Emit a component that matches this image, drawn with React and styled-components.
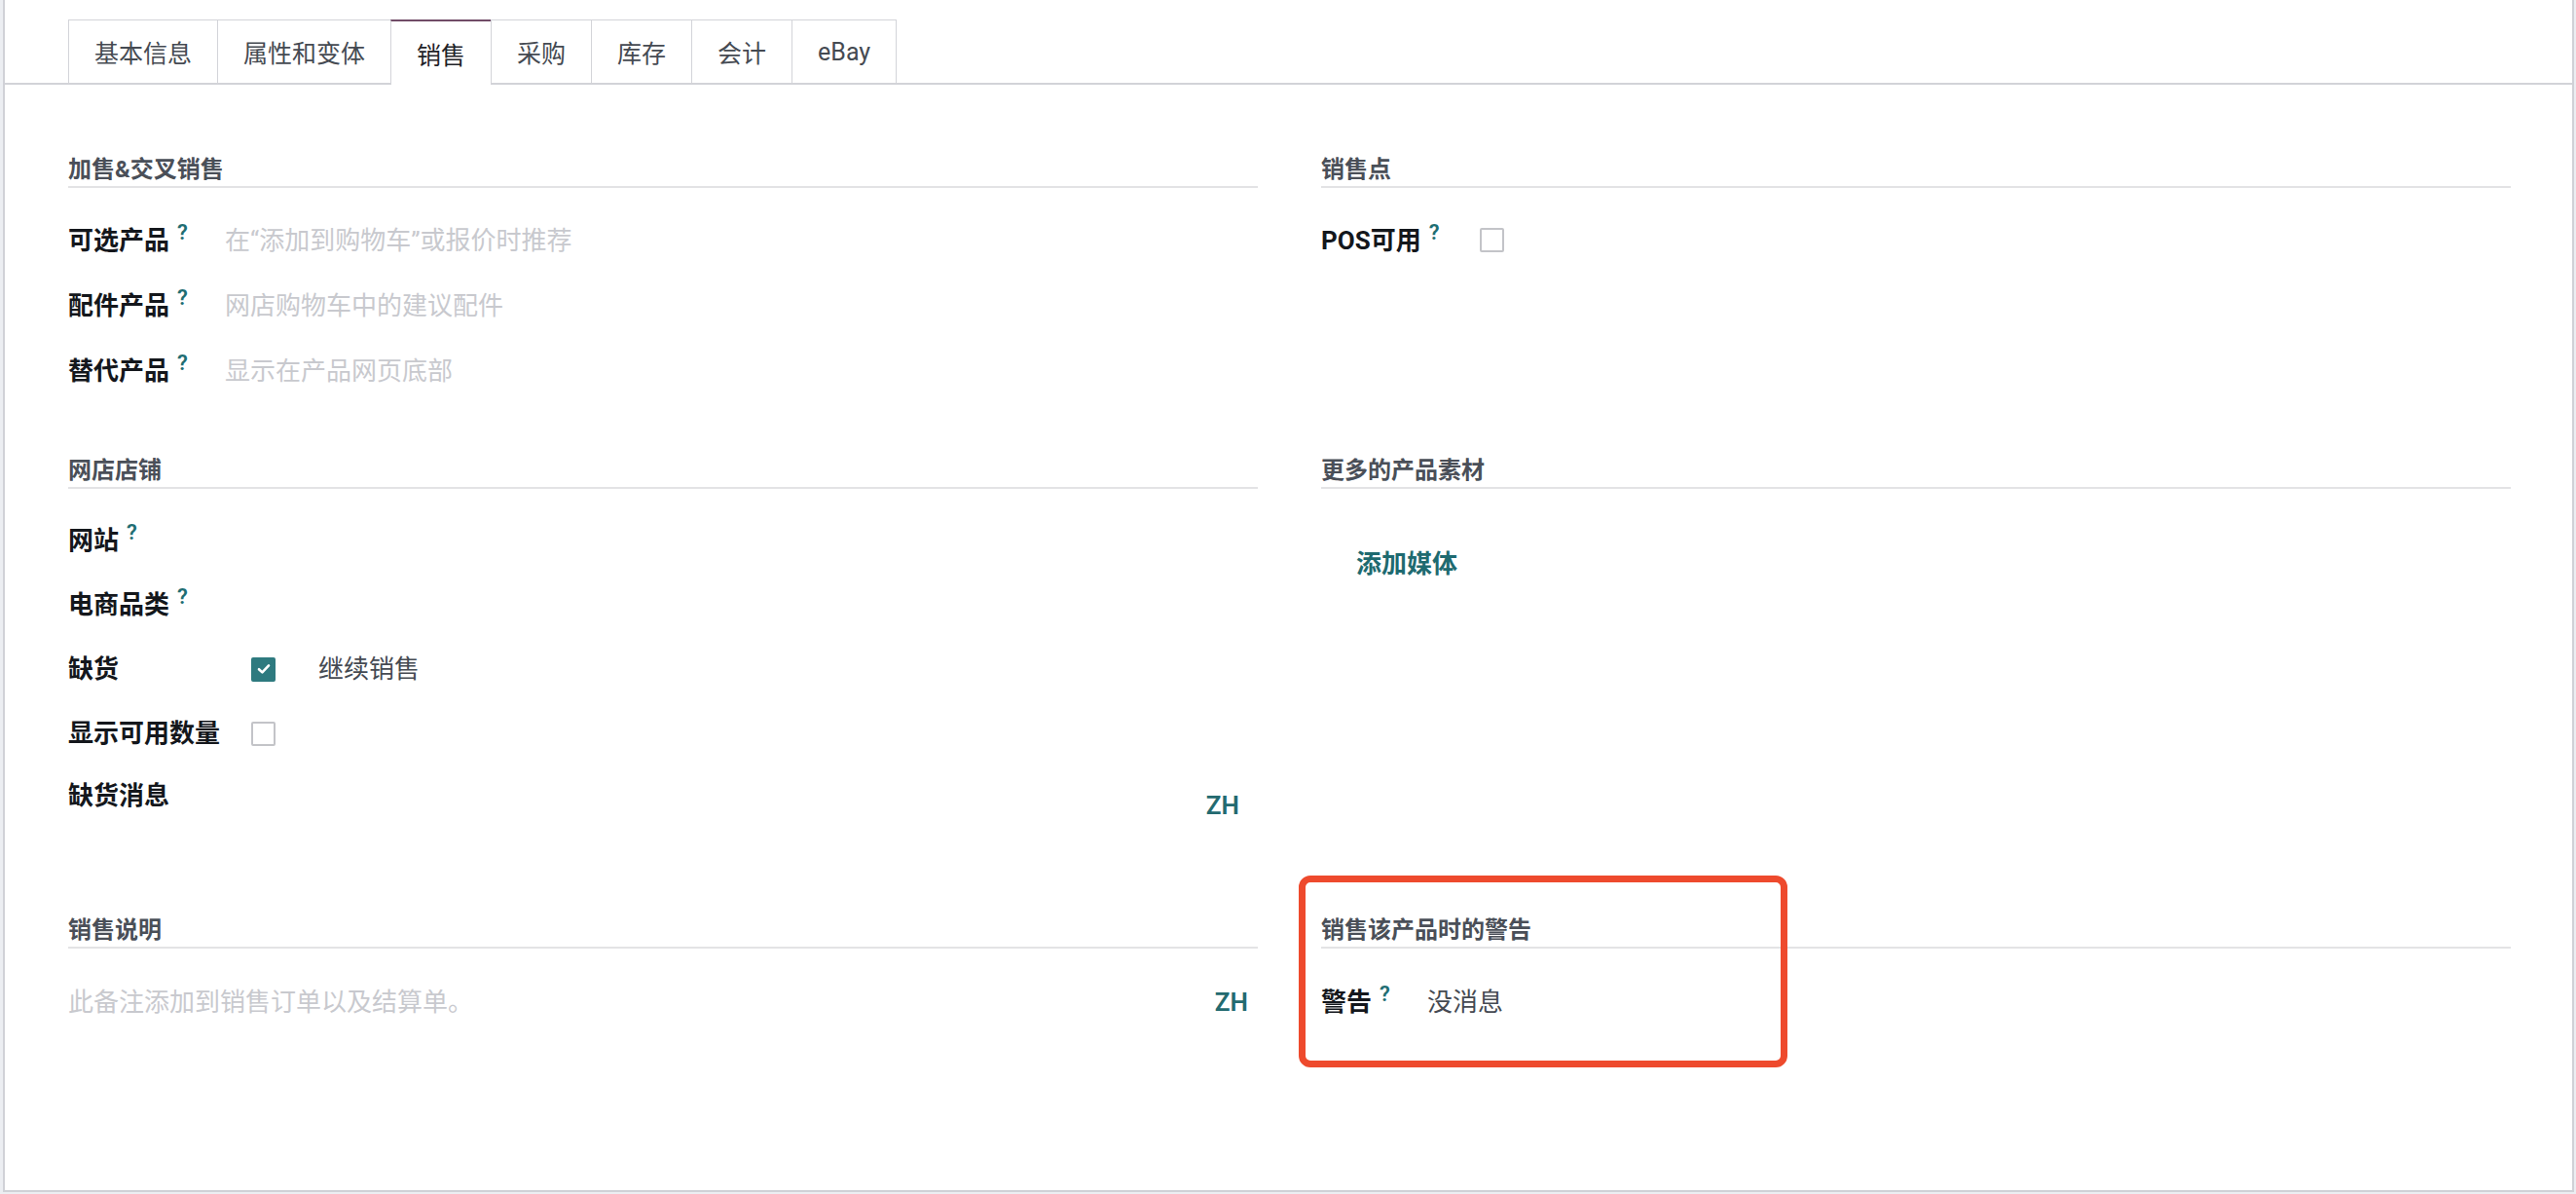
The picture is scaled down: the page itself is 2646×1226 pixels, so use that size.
import React from 'react';
import styled, { createGlobalStyle } from 'styled-components';

const FONT = `"Roboto", "Noto Sans CJK SC", sans-serif`;

const GlobalStyle = createGlobalStyle`
  html, body {
    margin: 0;
    padding: 0;
    background: #eceef2;
    font-family: ${FONT};
  }
  * { box-sizing: border-box; }
`;

const Panel = styled.div`
  position: relative;
  margin-left: 3px;
  width: 2641px;
  height: 1224px;
  background: #fff;
  border: 2px solid #d0d1d7;
  border-top: none;
  overflow: hidden;
`;

const TabBar = styled.div`
  display: flex;
  padding: 20px 0 0 65px;
  border-bottom: 2px solid #d2d3d8;
`;

const Tab = styled.div`
  padding: 0 26px;
  display: flex;
  align-items: center;
  font-size: 25px;
  color: ${(p) => (p.$active ? '#1f2328' : '#454a52')};
  background: #fff;
  border: 1px solid #d3d4d9;
  border-bottom: none;
  border-top: ${(p) => (p.$active ? '2px solid #714b67' : '1px solid #d3d4d9')};
  margin-left: -1px;
  margin-bottom: ${(p) => (p.$active ? '-2px' : '0')};
  height: ${(p) => (p.$active ? '67px' : '65px')};
  position: relative;
  &:first-child { margin-left: 0; }
`;

const Sheet = styled.div`
  display: grid;
  grid-template-columns: 1fr 1fr;
  column-gap: 65px;
  row-gap: 52px;
  padding: 70px 63px 0 65px;
`;

const Group = styled.div`
  position: relative;
  min-width: 0;
`;

const GroupTitle = styled.div`
  font-size: 24px;
  line-height: 34px;
  font-weight: 700;
  color: #4a4f58;
  border-bottom: 2px solid #e3e3e5;
`;

const Rows = styled.div`
  margin-top: 20px;
`;

const Row = styled.div`
  display: flex;
  align-items: ${(p) => (p.$top ? 'flex-start' : 'center')};
  min-height: ${(p) => p.$h || 66}px;
`;

const Label = styled.div`
  flex: 0 0 ${(p) => p.$w}px;
  font-size: 26px;
  line-height: 40px;
  font-weight: 700;
  color: #14171c;
  white-space: nowrap;
  padding-top: ${(p) => (p.$top ? '11px' : '0')};
`;

const Help = styled.sup`
  font-family: "Roboto", sans-serif;
  font-size: 22px;
  font-weight: 600;
  color: #1f6e73;
  margin-left: 8px;
  vertical-align: 10px;
  line-height: 0;
`;

const Placeholder = styled.div`
  font-size: 26px;
  line-height: 40px;
  color: #c8c9ce;
`;

const Value = styled.div`
  font-size: 26px;
  line-height: 40px;
  color: #454a52;
`;

const Box = styled.span`
  display: inline-flex;
  align-items: center;
  justify-content: center;
  width: 25px;
  height: 25px;
  border-radius: 2px;
  border: ${(p) => (p.$checked ? 'none' : '2px solid #c3c4c8')};
  background: ${(p) => (p.$checked ? '#2e7a7f' : '#fff')};
  margin-right: 44px;
`;

const HtmlField = styled.div`
  flex: 1;
  display: flex;
  justify-content: space-between;
  align-items: center;
  padding-right: ${(p) => p.$pr}px;
  padding-top: ${(p) => p.$pt || 0}px;
`;

const Lang = styled.span`
  font-family: "Roboto", sans-serif;
  font-size: 26px;
  font-weight: 600;
  color: #236a70;
  line-height: 40px;
`;

const MediaLink = styled.div`
  padding: 44px 0 0 36px;
  font-size: 26px;
  line-height: 66px;
  font-weight: 600;
  color: #1e6a70;
`;

const Callout = styled.div`
  position: absolute;
  left: -23px;
  top: -39px;
  width: 502px;
  height: 197px;
  border: 7px solid #ee4a2d;
  border-radius: 12px;
  pointer-events: none;
`;

const Check = () => (
  <svg width="14" height="12" viewBox="0 0 14 12">
    <path d="M2 6.2 L5.4 9.4 L12 2.4" fill="none" stroke="#fff" strokeWidth="2.6" strokeLinecap="round" strokeLinejoin="round" />
  </svg>
);

const Checkbox = ({ checked }) => <Box $checked={checked}>{checked && <Check />}</Box>;

const tabs = ['基本信息', '属性和变体', '销售', '采购', '库存', '会计', 'eBay'];

export default function App() {
  return (
    <>
      <GlobalStyle />
      <Panel>
        <TabBar>
          {tabs.map((t) => (
            <Tab key={t} $active={t === '销售'}>{t}</Tab>
          ))}
        </TabBar>

        <Sheet>
          <Group>
            <GroupTitle>加售&amp;交叉销售</GroupTitle>
            <Rows>
              <Row $h={67}>
                <Label $w={161}>可选产品<Help>?</Help></Label>
                <Placeholder>在“添加到购物车”或报价时推荐</Placeholder>
              </Row>
              <Row $h={67}>
                <Label $w={161}>配件产品<Help>?</Help></Label>
                <Placeholder>网店购物车中的建议配件</Placeholder>
              </Row>
              <Row $h={67}>
                <Label $w={161}>替代产品<Help>?</Help></Label>
                <Placeholder>显示在产品网页底部</Placeholder>
              </Row>
            </Rows>
          </Group>

          <Group>
            <GroupTitle>销售点</GroupTitle>
            <Rows>
              <Row $h={67}>
                <Label $w={163}>POS可用<Help>?</Help></Label>
                <Checkbox />
              </Row>
            </Rows>
          </Group>

          <Group>
            <GroupTitle>网店店铺</GroupTitle>
            <Rows>
              <Row>
                <Label $w={188}>网站<Help>?</Help></Label>
              </Row>
              <Row>
                <Label $w={188}>电商品类<Help>?</Help></Label>
              </Row>
              <Row>
                <Label $w={188}>缺货</Label>
                <Checkbox checked />
                <Value>继续销售</Value>
              </Row>
              <Row>
                <Label $w={188}>显示可用数量</Label>
                <Checkbox />
              </Row>
              <Row $top $h={100}>
                <Label $w={188} $top>缺货消息</Label>
                <HtmlField $pr={19} $pt={21}>
                  <span />
                  <Lang>ZH</Lang>
                </HtmlField>
              </Row>
            </Rows>
          </Group>

          <Group>
            <GroupTitle>更多的产品素材</GroupTitle>
            <MediaLink>添加媒体</MediaLink>
          </Group>

          <Group>
            <GroupTitle>销售说明</GroupTitle>
            <Rows>
              <Row $h={70}>
                <HtmlField $pr={10}>
                  <Placeholder>此备注添加到销售订单以及结算单。</Placeholder>
                  <Lang>ZH</Lang>
                </HtmlField>
              </Row>
            </Rows>
          </Group>

          <Group>
            <GroupTitle>销售该产品时的警告</GroupTitle>
            <Rows>
              <Row $h={70}>
                <Label $w={109}>警告<Help>?</Help></Label>
                <Value>没消息</Value>
              </Row>
            </Rows>
            <Callout />
          </Group>
        </Sheet>
      </Panel>
    </>
  );
}
